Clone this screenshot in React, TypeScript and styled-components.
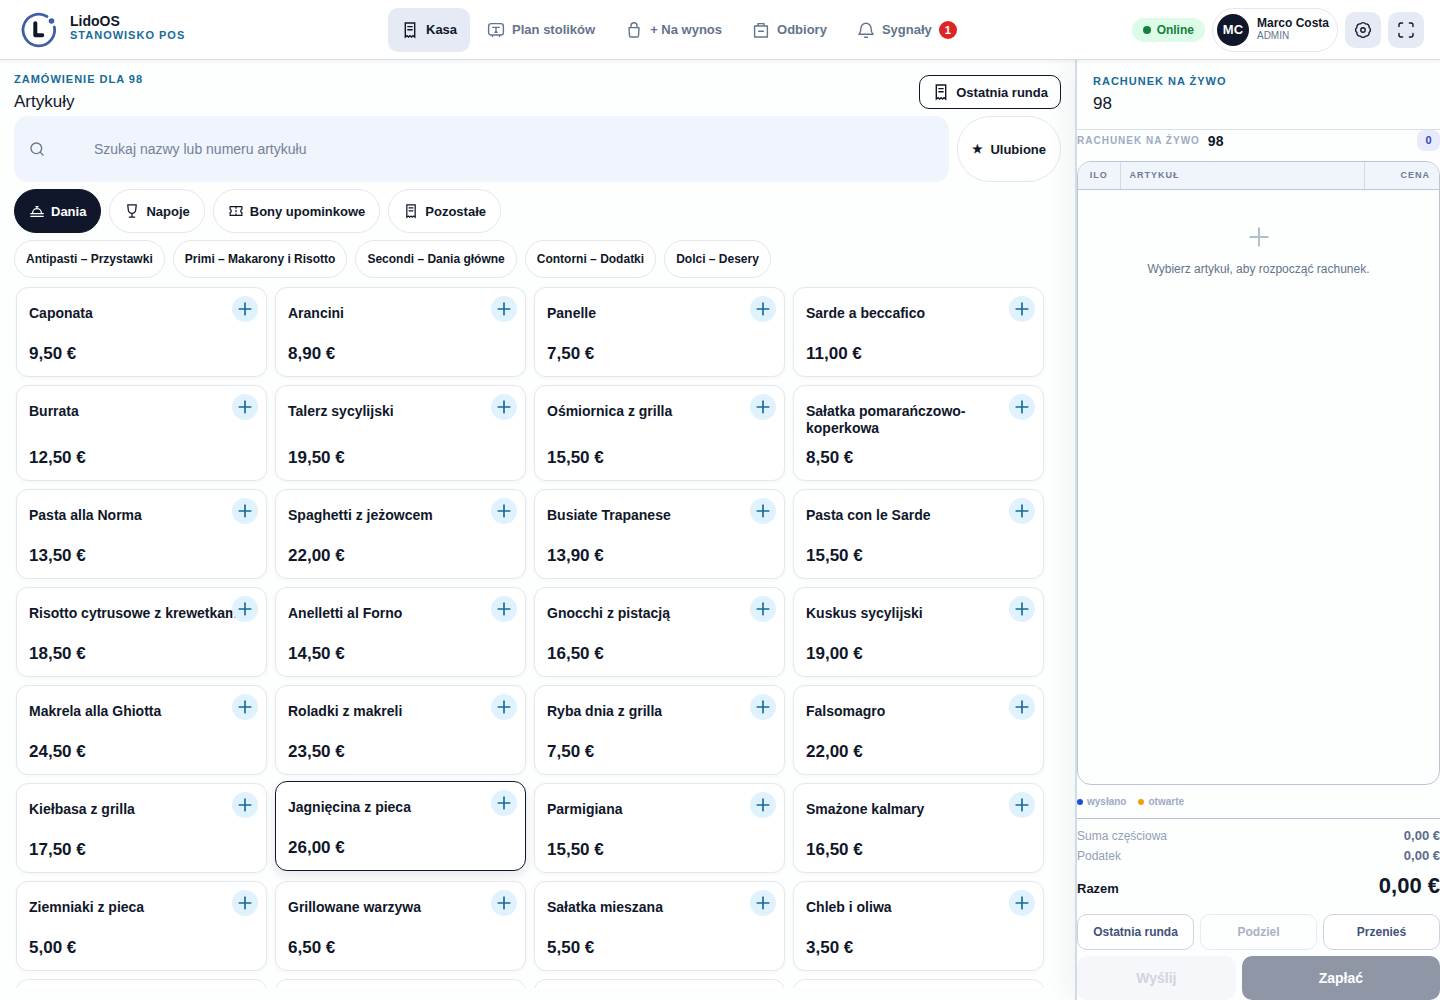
import { useState } from 'react';
import type { ReactNode } from 'react';
import styled, { createGlobalStyle, css } from 'styled-components';
import { Plus, Search } from 'lucide-react';

const navy = '#10172a';
const slate = '#64748b';
const blue = '#176b98';
const line = '#e4e7eb';
const sideLine = '#bcc5d6';
const sideMuted = '#94a0b8';
const sideText = '#43527a';

type Product = { id: number; name: string; price: string };

const products: Product[] = [
  { id: 1, name: 'Caponata', price: '9,50 €' },
  { id: 2, name: 'Arancini', price: '8,90 €' },
  { id: 3, name: 'Panelle', price: '7,50 €' },
  { id: 4, name: 'Sarde a beccafico', price: '11,00 €' },
  { id: 5, name: 'Burrata', price: '12,50 €' },
  { id: 6, name: 'Talerz sycylijski', price: '19,50 €' },
  { id: 7, name: 'Ośmiornica z grilla', price: '15,50 €' },
  { id: 8, name: 'Sałatka pomarańczowo-koperkowa', price: '8,50 €' },
  { id: 9, name: 'Pasta alla Norma', price: '13,50 €' },
  { id: 10, name: 'Spaghetti z jeżowcem', price: '22,00 €' },
  { id: 11, name: 'Busiate Trapanese', price: '13,90 €' },
  { id: 12, name: 'Pasta con le Sarde', price: '15,50 €' },
  { id: 13, name: 'Risotto cytrusowe z krewetkami', price: '18,50 €' },
  { id: 14, name: 'Anelletti al Forno', price: '14,50 €' },
  { id: 15, name: 'Gnocchi z pistacją', price: '16,50 €' },
  { id: 16, name: 'Kuskus sycylijski', price: '19,00 €' },
  { id: 17, name: 'Makrela alla Ghiotta', price: '24,50 €' },
  { id: 18, name: 'Roladki z makreli', price: '23,50 €' },
  { id: 19, name: 'Ryba dnia z grilla', price: '7,50 €' },
  { id: 20, name: 'Falsomagro', price: '22,00 €' },
  { id: 21, name: 'Kiełbasa z grilla', price: '17,50 €' },
  { id: 22, name: 'Jagnięcina z pieca', price: '26,00 €' },
  { id: 23, name: 'Parmigiana', price: '15,50 €' },
  { id: 24, name: 'Smażone kalmary', price: '16,50 €' },
  { id: 25, name: 'Ziemniaki z pieca', price: '5,00 €' },
  { id: 26, name: 'Grillowane warzywa', price: '6,50 €' },
  { id: 27, name: 'Sałatka mieszana', price: '5,50 €' },
  { id: 28, name: 'Chleb i oliwa', price: '3,50 €' },
];

const subcategories = [
  'Antipasti – Przystawki',
  'Primi – Makarony i Risotto',
  'Secondi – Dania główne',
  'Contorni – Dodatki',
  'Dolci – Desery',
];

const Icon = ({ size = 18, children }: { size?: number; children: ReactNode }) => (
  <svg
    width={size}
    height={size}
    viewBox="0 0 18 18"
    fill="none"
    stroke="currentColor"
    strokeWidth="1.4"
    strokeLinecap="round"
    strokeLinejoin="round"
    aria-hidden="true"
  >
    {children}
  </svg>
);

const ReceiptIcon = ({ size }: { size?: number }) => (
  <Icon size={size}>
    <path d="M4.3 2h9.4v14l-1.7-1.3-1.5 1.3L9 14.7 7.5 16 6 14.7 4.3 16z" strokeLinejoin="miter" />
    <path d="M6.8 5.6h4.4M6.8 8.8h4.4" />
  </Icon>
);

const TableIcon = () => (
  <Icon>
    <rect x="1.6" y="2.6" width="14.8" height="11.4" rx="2.6" />
    <path d="M5.8 6.4h6.4M9 6.4v4.8M7.8 11.2h2.4M5.4 14.4v1M12.6 14.4v1" />
  </Icon>
);

const BagIcon = () => (
  <Icon>
    <path d="M4 6.6h10l-.5 8.2a1.3 1.3 0 0 1-1.3 1.2H5.8a1.3 1.3 0 0 1-1.3-1.2z" />
    <path d="M6 6.4V4.8a3 3 0 0 1 6 0v1.6" />
  </Icon>
);

const PickupIcon = () => (
  <Icon>
    <path d="M2.6 5h12.8v11H2.6zM6 4.8V2.6h6v2.2M6.6 10.2h4.8" />
  </Icon>
);

const BellIcon = () => (
  <Icon>
    <path d="M1.9 13.2c1.5-1.5 2-3 2-5.8a5.1 5.1 0 0 1 10.2 0c0 2.8.5 4.3 2 5.8z" />
    <path d="M7.6 16.2h2.8" />
  </Icon>
);

const GearIcon = () => (
  <Icon>
    <path d="M15.1 6.47a3.1 3.1 0 0 1 0 5.06 3.1 3.1 0 0 1-3.57 3.57 3.1 3.1 0 0 1-5.06 0 3.1 3.1 0 0 1-3.57-3.57 3.1 3.1 0 0 1 0-5.06 3.1 3.1 0 0 1 3.57-3.57 3.1 3.1 0 0 1 5.06 0 3.1 3.1 0 0 1 3.57 3.57z" />
    <circle cx="9" cy="9" r="2.2" />
  </Icon>
);

const FullscreenIcon = () => (
  <Icon>
    <path d="M2 5.600V4a2 2 0 0 1 2-2h1.600M12.400 2H14a2 2 0 0 1 2 2v1.600M16 12.400V14a2 2 0 0 1-2 2h-1.600M5.600 16H4a2 2 0 0 1-2-2v-1.600" />
  </Icon>
);

const ClocheIcon = () => (
  <Icon size={16}>
    <path d="M4 11.400a5 5 0 0 1 10 0M9 6.200V4.200M7.800 4h2.400M2 12h14M2 15h14" />
  </Icon>
);

const GlassIcon = () => (
  <Icon size={16}>
    <path d="M4.200 2h9.600l-.6 5.400a4.200 4.200 0 0 1-8.400 0zM9 11.600V16M6 16h6" />
  </Icon>
);

const TicketIcon = () => (
  <Icon size={16}>
    <path
      d="M2.400 4h13.200v3.200a1.900 1.900 0 0 0 0 3.600V14H2.400v-3.200a1.900 1.900 0 0 0 0-3.600zM9 4.500v1.300M9 8.300v1.500M9 12.200v1.300"
      strokeLinejoin="miter"
    />
  </Icon>
);

const Logo = () => (
  <svg width="36" height="36" viewBox="0 0 36 36" fill="none" aria-hidden="true">
    <path
      d="M26 4.500A15.800 15.800 0 1 0 33.300 15"
      stroke="#3f5ea6"
      strokeWidth="2.800"
      strokeLinecap="round"
    />
    <circle cx="30.500" cy="9" r="2.800" fill="#3f5ea6" />
    <path
      d="M14.300 11.200v12h7"
      stroke={navy}
      strokeWidth="4"
      strokeLinecap="round"
      strokeLinejoin="round"
    />
  </svg>
);

const tabs = [
  { name: 'Kasa', icon: <ReceiptIcon /> },
  { name: 'Plan stolików', icon: <TableIcon /> },
  { name: '+ Na wynos', icon: <BagIcon /> },
  { name: 'Odbiory', icon: <PickupIcon /> },
  { name: 'Sygnały', icon: <BellIcon />, count: 1 },
];

const categories = [
  { name: 'Dania', icon: <ClocheIcon /> },
  { name: 'Napoje', icon: <GlassIcon /> },
  { name: 'Bony upominkowe', icon: <TicketIcon /> },
  { name: 'Pozostałe', icon: <ReceiptIcon size={16} /> },
];

const App = () => {
  const [tab, setTab] = useState('Kasa');
  const [category, setCategory] = useState('Dania');
  const [query, setQuery] = useState('');
  const [activeId, setActiveId] = useState(22);

  const visible = products.filter((p) => p.name.toLowerCase().includes(query.toLowerCase()));

  return (
    <Page>
      <GlobalStyle />
      <Header>
        <Brand>
          <Logo />
          <BrandText>
            <BrandName>LidoOS</BrandName>
            <BrandSub>STANOWISKO POS</BrandSub>
          </BrandText>
        </Brand>
        <Nav>
          {tabs.map((t) => (
            <NavButton key={t.name} $active={t.name === tab} onClick={() => setTab(t.name)}>
              {t.icon}
              {t.name}
              {t.count && <Count>{t.count}</Count>}
            </NavButton>
          ))}
        </Nav>
        <Actions>
          <Online>
            <Dot $size={8} $color="#15803d" />
            Online
          </Online>
          <UserButton>
            <Avatar>MC</Avatar>
            <span>
              <UserName>Marco Costa</UserName>
              <UserRole>ADMIN</UserRole>
            </span>
          </UserButton>
          <IconButton aria-label="Ustawienia">
            <GearIcon />
          </IconButton>
          <IconButton aria-label="Pełny ekran">
            <FullscreenIcon />
          </IconButton>
        </Actions>
      </Header>

      <Body>
        <Catalog>
          <CatalogTop>
            <div>
              <Eyebrow>ZAMÓWIENIE DLA 98</Eyebrow>
              <Title>Artykuły</Title>
            </div>
            <RoundButton>
              <ReceiptIcon />
              Ostatnia runda
            </RoundButton>
          </CatalogTop>
          <SearchRow>
            <SearchBox>
              <Search size={16} strokeWidth={2} />
              <SearchInput
                aria-label="Szukaj artykułu"
                placeholder="Szukaj nazwy lub numeru artykułu"
                value={query}
                onChange={(e) => setQuery(e.target.value)}
              />
            </SearchBox>
            <FavButton>
              <Star>★</Star>
              Ulubione
            </FavButton>
          </SearchRow>
          <Chips>
            {categories.map((c) => (
              <CategoryButton
                key={c.name}
                $active={c.name === category}
                onClick={() => setCategory(c.name)}
              >
                {c.icon}
                {c.name}
              </CategoryButton>
            ))}
          </Chips>
          <Chips>
            {subcategories.map((s) => (
              <SubButton key={s}>{s}</SubButton>
            ))}
          </Chips>
          <Grid>
            {visible.map((p) => (
              <Card key={p.id} $active={p.id === activeId} onClick={() => setActiveId(p.id)}>
                <CardName>{p.name}</CardName>
                <CardPrice>{p.price}</CardPrice>
                <AddMark>
                  <Plus size={20} strokeWidth={2} />
                </AddMark>
              </Card>
            ))}
            {[0, 1, 2, 3].map((n) => (
              <EmptyCard key={n} />
            ))}
          </Grid>
        </Catalog>

        <Bill>
          <BillHeader>
            <Eyebrow>RACHUNEK NA ŻYWO</Eyebrow>
            <Title>98</Title>
          </BillHeader>
          <BillMeta>
            <MetaLabel>RACHUNEK NA ŻYWO</MetaLabel>
            <MetaTable>98</MetaTable>
            <MetaCount>0</MetaCount>
          </BillMeta>
          <TableFrame>
            <BillTable>
              <thead>
                <tr>
                  <Th $width="42px">ILO</Th>
                  <Th>ARTYKUŁ</Th>
                  <Th $width="75px" $right>
                    CENA
                  </Th>
                </tr>
              </thead>
              <tbody>
                <tr>
                  <Empty colSpan={3}>
                    <Plus size={30} strokeWidth={1.6} color="#b4bfce" />
                    <p>Wybierz artykuł, aby rozpocząć rachunek.</p>
                  </Empty>
                </tr>
              </tbody>
            </BillTable>
          </TableFrame>
          <Legend>
            <LegendItem>
              <Dot $size={6} $color="#1d4ed8" />
              wysłano
            </LegendItem>
            <LegendItem>
              <Dot $size={6} $color="#f59e0b" />
              otwarte
            </LegendItem>
          </Legend>
          <Totals>
            <TotalRow>
              <dt>Suma częściowa</dt>
              <dd>0,00 €</dd>
            </TotalRow>
            <TotalRow>
              <dt>Podatek</dt>
              <dd>0,00 €</dd>
            </TotalRow>
            <GrandRow>
              <dt>Razem</dt>
              <dd>0,00 €</dd>
            </GrandRow>
          </Totals>
          <BillActions>
            <BillButton>Ostatnia runda</BillButton>
            <BillButton disabled>Podziel</BillButton>
            <BillButton>Przenieś</BillButton>
          </BillActions>
          <PayRow>
            <SendButton disabled>Wyślij</SendButton>
            <PayButton disabled>Zapłać</PayButton>
          </PayRow>
        </Bill>
      </Body>
    </Page>
  );
};

const GlobalStyle = createGlobalStyle`
  * {
    box-sizing: border-box;
  }

  body {
    margin: 0;
    color: ${navy};
    background-color: #fdfefe;
    font-family: 'Liberation Sans', Arial, sans-serif;
    font-size: 13px;
  }

  button,
  input {
    margin: 0;
    font-family: inherit;
    color: inherit;
  }

  button {
    cursor: pointer;
  }

  p,
  dl,
  dd {
    margin: 0;
  }

  svg {
    flex: none;
  }
`;

const Page = styled.div`
  display: flex;
  flex-direction: column;
  height: 100vh;
  overflow: hidden;
`;

const Header = styled.header`
  position: relative;
  z-index: 1;
  display: flex;
  align-items: center;
  flex: none;
  height: 60px;
  padding: 0 16px 0 21px;
  border-bottom: 1px solid #dbe0e4;
  background-color: white;
  box-shadow: 0 1px 4px rgba(15, 23, 42, 0.08);
`;

const Brand = styled.div`
  display: flex;
  align-items: center;
  gap: 13px;
  flex: 0 0 367px;
`;

const BrandText = styled.div`
  padding-bottom: 3px;
`;

const BrandName = styled.div`
  font-size: 14px;
  font-weight: 700;
  line-height: 15px;
`;

const BrandSub = styled.div`
  color: ${blue};
  font-size: 11px;
  font-weight: 700;
  line-height: 13px;
  letter-spacing: 1px;
`;

const Nav = styled.nav`
  display: flex;
  gap: 4px;
`;

const NavButton = styled.button<{ $active: boolean }>`
  display: flex;
  align-items: center;
  gap: 7px;
  height: 44px;
  padding: 0 13px;
  border: none;
  border-radius: 10px;
  background-color: ${(props) => (props.$active ? '#e5eaf4' : 'transparent')};
  color: ${(props) => (props.$active ? navy : slate)};
  font-size: 13px;
  font-weight: 700;
  white-space: nowrap;
`;

const Count = styled.span`
  min-width: 18px;
  border-radius: 9px;
  background-color: #dc2626;
  color: white;
  font-size: 11px;
  line-height: 18px;
  text-align: center;
`;

const Actions = styled.div`
  display: flex;
  align-items: center;
  gap: 7px;
  margin-left: auto;
`;

const Online = styled.div`
  display: flex;
  align-items: center;
  gap: 6px;
  height: 24px;
  padding: 0 11px;
  border-radius: 12px;
  background-color: #dcfce7;
  color: #15803d;
  font-size: 12px;
  font-weight: 700;
`;

const Dot = styled.span<{ $size: number; $color: string }>`
  width: ${(props) => props.$size}px;
  height: ${(props) => props.$size}px;
  border-radius: 50%;
  background-color: ${(props) => props.$color};
`;

const UserButton = styled.button`
  display: flex;
  align-items: center;
  gap: 8px;
  height: 44px;
  padding: 0 8px 0 4px;
  border: 1px solid ${line};
  border-radius: 22px;
  background-color: white;
  text-align: left;
`;

const Avatar = styled.span`
  width: 32px;
  border-radius: 50%;
  background-color: ${navy};
  color: white;
  font-size: 13px;
  font-weight: 700;
  line-height: 32px;
  text-align: center;
`;

const UserName = styled.span`
  display: block;
  font-size: 12px;
  font-weight: 700;
  line-height: 13px;
`;

const UserRole = styled.span`
  display: block;
  color: ${slate};
  font-size: 10px;
  line-height: 12px;
`;

const IconButton = styled.button`
  display: grid;
  place-items: center;
  width: 36px;
  height: 36px;
  padding: 0;
  border: none;
  border-radius: 10px;
  background-color: #e5eaf4;
`;

const Body = styled.div`
  display: grid;
  grid-template-columns: minmax(0, 1fr) 365px;
  flex: 1;
  min-height: 0;
`;

const Catalog = styled.main`
  display: flex;
  flex-direction: column;
  gap: 7px;
  min-height: 0;
  padding: 12px 14px;
`;

const CatalogTop = styled.div`
  display: flex;
  align-items: flex-start;
  justify-content: space-between;
  flex: none;
  height: 37px;
`;

const Eyebrow = styled.div`
  color: ${blue};
  font-size: 11px;
  font-weight: 700;
  line-height: 14px;
  letter-spacing: 1px;
`;

const Title = styled.h1`
  margin: 0;
  font-size: 17px;
  font-weight: 400;
  line-height: 32px;
`;

const RoundButton = styled.button`
  display: flex;
  align-items: center;
  align-self: flex-end;
  gap: 6px;
  height: 34px;
  padding: 0 12px;
  border: 1px solid ${navy};
  border-radius: 10px;
  background-color: white;
  font-size: 13px;
  font-weight: 700;
`;

const SearchRow = styled.div`
  display: flex;
  gap: 8px;
  flex: none;
  height: 66px;
`;

const SearchBox = styled.label`
  display: flex;
  align-items: center;
  flex: 1;
  padding: 0 15px;
  border-radius: 14px;
  background-color: #f0f4fd;
  color: ${slate};
`;

const SearchInput = styled.input`
  flex: 1;
  height: 100%;
  padding: 0 0 0 49px;
  border: none;
  outline: none;
  background: transparent;
  font-size: 14px;

  &::placeholder {
    color: #758196;
    opacity: 1;
  }
`;

const pill = css`
  display: flex;
  align-items: center;
  border: 1px solid ${line};
  background-color: white;
  font-weight: 700;
  white-space: nowrap;
`;

const FavButton = styled.button`
  ${pill}
  gap: 7px;
  padding: 0 14px;
  border-radius: 34px;
  font-size: 13px;
`;

const Star = styled.span`
  font-size: 12px;
`;

const Chips = styled.div`
  display: flex;
  gap: 8px;
`;

const CategoryButton = styled.button<{ $active: boolean }>`
  ${pill}
  gap: 6px;
  height: 44px;
  padding: 0 14px;
  border-radius: 22px;
  font-size: 13px;
  ${(props) =>
    props.$active &&
    css`
      border-color: ${navy};
      background-color: ${navy};
      color: white;
    `}
`;

const SubButton = styled.button`
  ${pill}
  height: 38px;
  padding: 0 11px;
  border-radius: 19px;
  font-size: 12px;
`;

const Grid = styled.section`
  display: grid;
  grid-template-columns: repeat(4, minmax(0, 1fr));
  grid-auto-rows: max-content;
  gap: 8px;
  flex: 1;
  min-height: 0;
  padding: 2px 17px 2px 2px;
  overflow: hidden;
`;

const Card = styled.button<{ $active: boolean }>`
  position: relative;
  display: flex;
  flex-direction: column;
  justify-content: space-between;
  gap: 10px;
  min-height: 90px;
  padding: 17px 12px 11px;
  border: 1px solid ${(props) => (props.$active ? navy : line)};
  border-radius: 12px;
  background-color: white;
  box-shadow: ${(props) =>
    props.$active ? '0 4px 12px rgba(15, 23, 42, 0.1)' : '0 1px 4px rgba(15, 23, 42, 0.04)'};
  transform: ${(props) => (props.$active ? 'translateY(-2px)' : 'none')};
  text-align: left;
`;

const EmptyCard = styled.div`
  min-height: 90px;
  border: 1px solid ${line};
  border-radius: 12px;
  background-color: white;
`;

const CardName = styled.span`
  font-size: 14px;
  font-weight: 700;
  line-height: 17px;
`;

const CardPrice = styled.span`
  font-size: 17px;
  font-weight: 700;
  line-height: 22px;
`;

const AddMark = styled.span`
  position: absolute;
  top: 8px;
  right: 8px;
  display: grid;
  place-items: center;
  width: 26px;
  height: 26px;
  border-radius: 50%;
  background-color: #e0f2fe;
  color: ${blue};
`;

const Bill = styled.aside`
  display: flex;
  flex-direction: column;
  min-height: 0;
  border-left: 2px solid #d2dce5;
  background-color: #fdfefe;
  box-shadow: -8px 0 24px rgba(15, 60, 80, 0.05);
`;

const BillHeader = styled.div`
  height: 70px;
  padding: 14px 16px 0;
  border-bottom: 1px solid #d8dee8;
`;

const BillMeta = styled.div`
  display: flex;
  align-items: center;
  gap: 8px;
  height: 21px;
`;

const MetaLabel = styled.span`
  color: #a0abc3;
  font-size: 10px;
  font-weight: 700;
  letter-spacing: 1px;
`;

const MetaTable = styled.strong`
  font-size: 14px;
`;

const MetaCount = styled.span`
  width: 23px;
  margin-left: auto;
  border-radius: 8px;
  background-color: #e6eafa;
  color: #2f49ad;
  font-size: 11px;
  font-weight: 700;
  line-height: 21px;
  text-align: center;
`;

const TableFrame = styled.div`
  flex: 1;
  min-height: 0;
  margin-top: 10px;
  border: 1px solid ${sideLine};
  border-radius: 14px;
  overflow: hidden;
`;

const BillTable = styled.table`
  width: 100%;
  border-collapse: collapse;
  table-layout: fixed;
`;

const Th = styled.th<{ $width?: string; $right?: boolean }>`
  width: ${(props) => props.$width || 'auto'};
  height: 27px;
  padding: 0 9px;
  border-right: 1px solid #d3dae6;
  border-bottom: 1px solid ${sideLine};
  background-color: #f0f4fb;
  color: #6c7b99;
  font-size: 9px;
  letter-spacing: 1px;
  text-align: ${(props) => (props.$right ? 'right' : 'left')};

  &:first-child {
    text-align: center;
  }

  &:last-child {
    border-right: none;
  }
`;

const Empty = styled.td`
  padding: 32px 16px;
  color: #64748b;
  font-size: 12px;
  line-height: 16px;
  text-align: center;

  p {
    margin-top: 5px;
  }
`;

const Legend = styled.div`
  display: flex;
  align-items: center;
  gap: 12px;
  height: 33px;
`;

const LegendItem = styled.span`
  display: flex;
  align-items: center;
  gap: 4px;
  color: #a0abc3;
  font-size: 10px;
  font-weight: 700;
`;

const Totals = styled.dl`
  padding: 7px 0 10px;
  border-top: 1px solid ${sideLine};
`;

const TotalRow = styled.div`
  display: flex;
  justify-content: space-between;
  color: ${sideMuted};
  font-size: 12px;
  line-height: 20px;

  dd {
    color: #5b6a8c;
    font-size: 13px;
    font-weight: 700;
  }
`;

const GrandRow = styled.div`
  display: flex;
  align-items: baseline;
  justify-content: space-between;
  margin-top: 5px;
  font-size: 13px;
  font-weight: 700;
  line-height: 30px;

  dd {
    font-size: 22px;
  }
`;

const BillActions = styled.div`
  display: grid;
  grid-template-columns: repeat(3, 1fr);
  gap: 6px;
`;

const BillButton = styled.button`
  height: 36px;
  padding: 0;
  border: 1px solid #ccd3e2;
  border-radius: 10px;
  background-color: white;
  color: ${sideText};
  font-size: 12px;
  font-weight: 700;

  &:disabled {
    opacity: 0.45;
  }
`;

const PayRow = styled.div`
  display: grid;
  grid-template-columns: 4fr 5fr;
  gap: 6px;
  margin-top: 6px;
`;

const SendButton = styled.button`
  height: 44px;
  border: none;
  border-radius: 10px;
  background-color: #f6f7fa;
  color: #d0d4de;
  font-size: 14px;
  font-weight: 700;
`;

const PayButton = styled(SendButton)`
  background-color: #8f96a6;
  color: white;
`;

export default App;
